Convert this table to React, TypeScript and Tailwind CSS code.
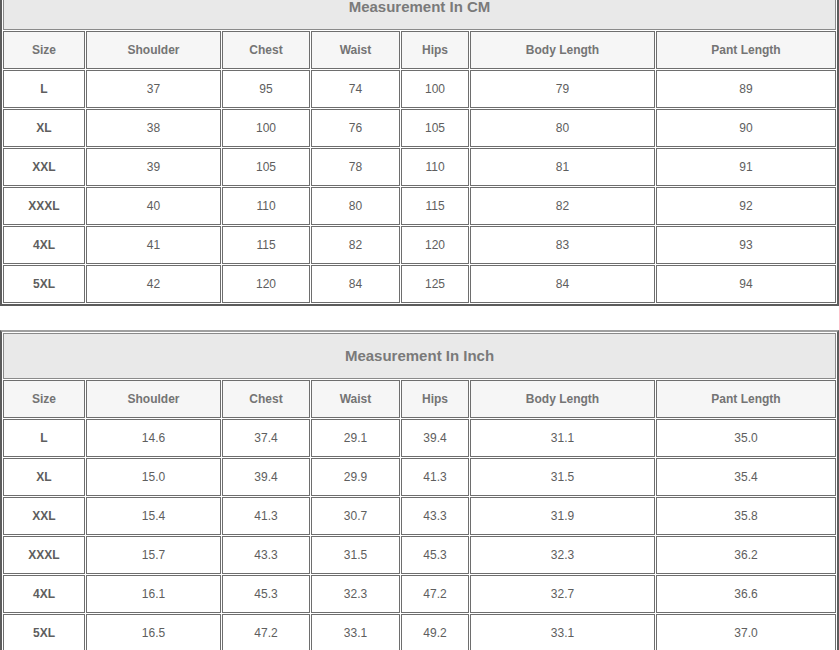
const columns = ["Size", "Shoulder", "Chest", "Waist", "Hips", "Body Length", "Pant Length"];

const colWidths = ["w-[82px]", "w-[135px]", "w-[88px]", "w-[89px]", "w-[68px]", "w-[185px]", "w-[180px]"];

const cmRows = [
  ["L", "37", "95", "74", "100", "79", "89"],
  ["XL", "38", "100", "76", "105", "80", "90"],
  ["XXL", "39", "105", "78", "110", "81", "91"],
  ["XXXL", "40", "110", "80", "115", "82", "92"],
  ["4XL", "41", "115", "82", "120", "83", "93"],
  ["5XL", "42", "120", "84", "125", "84", "94"],
];

const inchRows = [
  ["L", "14.6", "37.4", "29.1", "39.4", "31.1", "35.0"],
  ["XL", "15.0", "39.4", "29.9", "41.3", "31.5", "35.4"],
  ["XXL", "15.4", "41.3", "30.7", "43.3", "31.9", "35.8"],
  ["XXXL", "15.7", "43.3", "31.5", "45.3", "32.3", "36.2"],
  ["4XL", "16.1", "45.3", "32.3", "47.2", "32.7", "36.6"],
  ["5XL", "16.5", "47.2", "33.1", "49.2", "33.1", "37.0"],
];

const cell = "h-[38px] border border-[#6e6e6e] p-0 text-center align-middle text-[12px]";

function SizeTable({ title, rows }: { title: string; rows: string[][] }) {
  return (
    <table className="w-[839px] table-fixed border-separate border-spacing-[1px] border-2 border-[#5c5c5c] border-t-[#a0a0a0] font-['Liberation_Sans',Arial,sans-serif]">
      <colgroup>
        {colWidths.map((w, i) => (
          <col key={i} className={w} />
        ))}
      </colgroup>
      <thead>
        <tr>
          <th
            colSpan={7}
            className="h-[46px] border border-[#8a8a8a] bg-[#e9e9e9] p-0 text-center align-middle text-[15px] font-bold text-[#7a7a7a]"
          >
            {title}
          </th>
        </tr>
        <tr>
          {columns.map((c) => (
            <th key={c} className={`${cell} bg-[#f6f6f6] font-bold text-[#747474]`}>
              {c}
            </th>
          ))}
        </tr>
      </thead>
      <tbody>
        {rows.map((r) => (
          <tr key={r[0]}>
            {r.map((v, i) => (
              <td
                key={i}
                className={
                  i === 0
                    ? `${cell} bg-white font-bold text-[#5e5e5e]`
                    : `${cell} bg-white text-[#5e5e5e]`
                }
              >
                {v}
              </td>
            ))}
          </tr>
        ))}
      </tbody>
    </table>
  );
}

export default function App() {
  return (
    <div className="h-[650px] w-[839px] overflow-hidden bg-white">
      <div className="-mt-[19px] flex flex-col gap-[24px]">
        <SizeTable title="Measurement In CM" rows={cmRows} />
        <SizeTable title="Measurement In Inch" rows={inchRows} />
      </div>
    </div>
  );
}
